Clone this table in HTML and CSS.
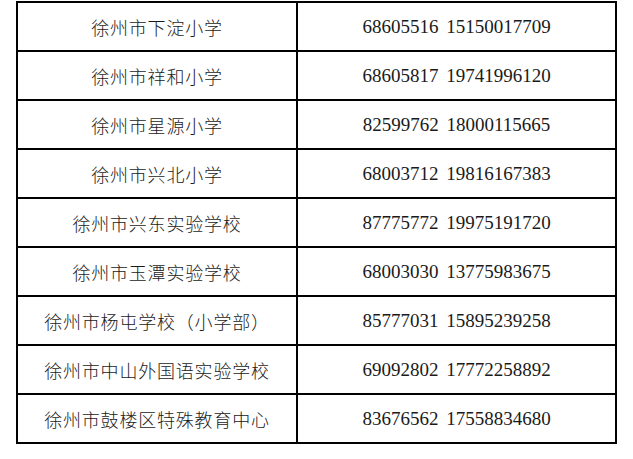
FILE: index.html
```html
<!DOCTYPE html>
<html lang="zh-CN">
<head>
<meta charset="utf-8">
<link rel="stylesheet" href="styles.css">
</head>
<body>
<table class="contacts">
  <tbody>
    <tr><td class="school">徐州市下淀小学</td><td class="phone">68605516 15150017709</td></tr>
    <tr><td class="school">徐州市祥和小学</td><td class="phone">68605817 19741996120</td></tr>
    <tr><td class="school">徐州市星源小学</td><td class="phone">82599762 18000115665</td></tr>
    <tr><td class="school">徐州市兴北小学</td><td class="phone">68003712 19816167383</td></tr>
    <tr><td class="school">徐州市兴东实验学校</td><td class="phone">87775772 19975191720</td></tr>
    <tr><td class="school">徐州市玉潭实验学校</td><td class="phone">68003030 13775983675</td></tr>
    <tr><td class="school">徐州市杨屯学校（小学部）</td><td class="phone">85777031 15895239258</td></tr>
    <tr><td class="school">徐州市中山外国语实验学校</td><td class="phone">69092802 17772258892</td></tr>
    <tr><td class="school">徐州市鼓楼区特殊教育中心</td><td class="phone">83676562 17558834680</td></tr>
  </tbody>
</table>
</body>
</html>
```

FILE: styles.css
```css
html, body {
  margin: 0;
  padding: 0;
  background: #ffffff;
}

body {
  padding: 1px 0 0 16px;
}

.contacts {
  border-collapse: collapse;
  table-layout: fixed;
  width: 601px;
  color: #1a1a1a;
}

.contacts td {
  border: 2px solid #000;
  height: 47px;
  padding: 0;
  text-align: center;
  vertical-align: middle;
  white-space: nowrap;
}

.contacts .school {
  width: 278px;
  font-family: "Noto Sans CJK SC", sans-serif;
  font-weight: 300;
  font-size: 18px;
  letter-spacing: 0.8px;
}

.contacts .phone {
  font-family: "Liberation Serif", "Noto Sans CJK SC", serif;
  font-size: 19px;
  word-spacing: 3px;
}
```
